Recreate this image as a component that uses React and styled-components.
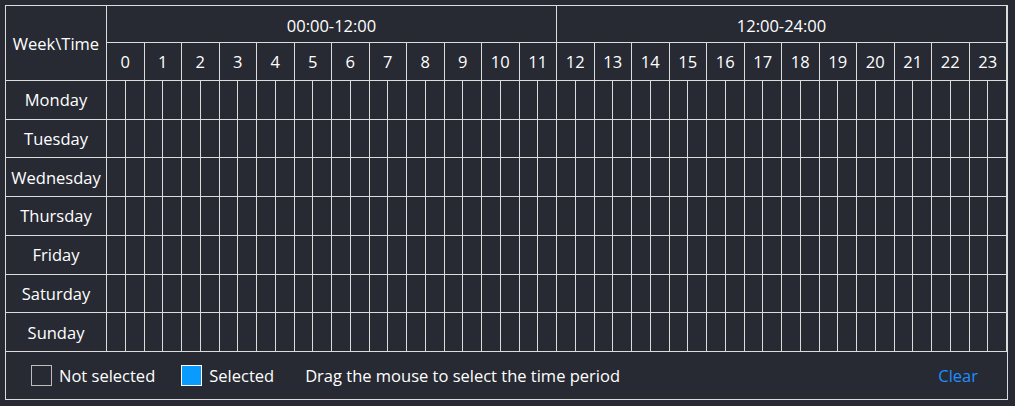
import React from 'react'
import styled, {createGlobalStyle} from 'styled-components'

const GlobalStyle = createGlobalStyle`
    html, body {
        margin: 0;
        background: #272a33;
    }
    body {
        padding: 5px;
        font-family: "Open Sans", "Noto Sans", sans-serif;
        color: #ffffff;
    }
`

const DAYS = ['Monday', 'Tuesday', 'Wednesday', 'Thursday', 'Friday', 'Saturday', 'Sunday']
const HOURS = Array.from({length: 24}, (_, i) => i)
const HALVES = Array.from({length: 48}, (_, i) => i)

const Panel = styled.div`
    width: 1001px;
    border: 1px solid #dcdcdc;
    background: #272a33;
`

const Grid = styled.div`
    display: grid;
    grid-template-columns: 101px repeat(48, 1fr);
    grid-template-rows: 37px 38px repeat(7, 1fr);
    height: 346px;
`

const Cell = styled.div`
    box-sizing: border-box;
    border-right: 1px solid #dcdcdc;
    border-bottom: 1px solid #dcdcdc;
    display: flex;
    align-items: center;
    justify-content: center;
    font-size: 16.5px;
    white-space: nowrap;
    grid-column: ${p => p.$col || 'auto'};
    grid-row: ${p => p.$row || 'auto'};
    padding-top: ${p => p.$drop || 0}px;
    cursor: ${p => p.$slot ? 'pointer' : 'default'};
    background: ${p => p.$on ? '#0a9bff' : 'transparent'};
`

const Footer = styled.div`
    height: 47px;
    display: flex;
    align-items: center;
    padding: 0 29px 0 25px;
    font-size: 16.5px;
    line-height: 1;
`

const Legend = styled.div`
    display: flex;
    align-items: center;
    gap: 7px;
    margin-right: 26px;
`

const Label = styled.span`
    padding-top: 2px;
`

const Swatch = styled.span`
    box-sizing: border-box;
    width: 21px;
    height: 21px;
    border: 1px solid ${p => p.$on ? '#ffffff' : '#bdbdbd'};
    background: ${p => p.$on ? '#0a9bff' : 'transparent'};
`

const Hint = styled(Label)`
    margin-left: 5px;
`

const ClearButton = styled.button`
    margin-left: auto;
    padding: 2px 0 0;
    background: none;
    border: none;
    font: inherit;
    color: #1e8fff;
    cursor: pointer;
`

const App = () => {
    return (
        <>
            <GlobalStyle />
            <Panel>
                <Grid>
                    <Cell $col="1" $row="1 / span 2">Week\Time</Cell>
                    <Cell $col="2 / span 24" $row="1" $drop={3}>00:00-12:00</Cell>
                    <Cell $col="26 / span 24" $row="1" $drop={3}>12:00-24:00</Cell>
                    {HOURS.map(h => (
                        <Cell key={h} $col={`${2 + h * 2} / span 2`} $row="2">{h}</Cell>
                    ))}
                    {DAYS.map((day, d) => (
                        <React.Fragment key={day}>
                            <Cell $col="1" $row={`${3 + d}`}>{day}</Cell>
                            {HALVES.map(s => (
                                <Cell key={s} $slot $col={`${2 + s}`} $row={`${3 + d}`} />
                            ))}
                        </React.Fragment>
                    ))}
                </Grid>
                <Footer>
                    <Legend><Swatch /><Label>Not selected</Label></Legend>
                    <Legend><Swatch $on /><Label>Selected</Label></Legend>
                    <Hint>Drag the mouse to select the time period</Hint>
                    <ClearButton>Clear</ClearButton>
                </Footer>
            </Panel>
        </>
    )
}

export default App
